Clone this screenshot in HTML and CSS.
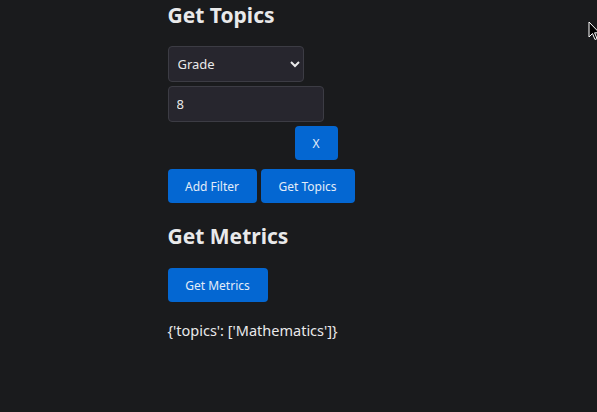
FILE: index.html
```html
<!DOCTYPE html>
<html lang="en">
  <head>
    <meta charset="UTF-8" />
    <title>Topics</title>
    <link rel="stylesheet" href="styles.css">
  </head>
  <body>
    <div class="main">
      <h2 class="title">Get Topics</h2>

      <div class="filter">
        <select class="field">
          <option>Grade</option>
        </select>
        <input class="value" type="text" value="8" />
        <div class="remove_row">
          <button class="btn btn_x">X</button>
        </div>
      </div>

      <div class="actions">
        <button class="btn">Add Filter</button>
        <button class="btn">Get Topics</button>
      </div>

      <h2 class="title title2">Get Metrics</h2>
      <button class="btn btn_metrics">Get Metrics</button>

      <p class="result">{'topics': ['Mathematics']}</p>
    </div>

    <svg class="cursor" width="12" height="20" viewBox="0 0 12 20">
      <path d="M1 1 L1 16 L4.5 12.5 L7 18.5 L9 17.6 L6.6 11.8 L11.4 11.8 Z" fill="#000" stroke="#fff" stroke-width="1" />
    </svg>
  </body>
</html>
```

FILE: styles.css
```css
body {
  margin: 0;
  background: #1a1b1d;
  color: #e9e9ea;
  font-family: "Noto Sans", sans-serif;
}
.main {
  width: 262px;
  margin: 0 auto;
  padding-top: 1px;
}
.title {
  font-size: 21px;
  font-weight: 700;
  margin: 1px 0 18px;
  line-height: 26px;
}
.title2 {
  margin-top: 20px;
  margin-bottom: 19px;
}
.filter {
  display: flex;
  flex-direction: column;
  gap: 4px;
}
.field,
.value {
  background: #27262e;
  color: #e9e9ea;
  border: 1px solid #3c3c44;
  border-radius: 4px;
  height: 36px;
  font-family: "Noto Sans", sans-serif;
  font-size: 13px;
  padding: 0 8px;
  box-sizing: border-box;
  outline: 0;
}
.field {
  width: 136px;
  padding-left: 5px;
}
.value {
  width: 156px;
}
.remove_row {
  width: 170px;
  display: flex;
  justify-content: flex-end;
}
.btn {
  background: #0467d2;
  color: #e3ecf8;
  border: none;
  border-radius: 4px;
  height: 34px;
  padding: 0 17px;
  font-family: "Noto Sans", sans-serif;
  font-size: 12px;
  cursor: pointer;
}
.btn_x {
  width: 43px;
  padding: 0;
}
.actions {
  display: flex;
  gap: 4px;
  margin-top: 9px;
}
.actions .btn:first-child {
  width: 89px;
  padding: 0;
}
.actions .btn:last-child {
  width: 94px;
  padding: 0;
}
.btn_metrics {
  width: 100px;
  padding: 0;
}
.result {
  font-size: 14.5px;
  margin: 18px 0 0;
}
.cursor {
  position: absolute;
  top: 21px;
  left: 588px;
}
```
